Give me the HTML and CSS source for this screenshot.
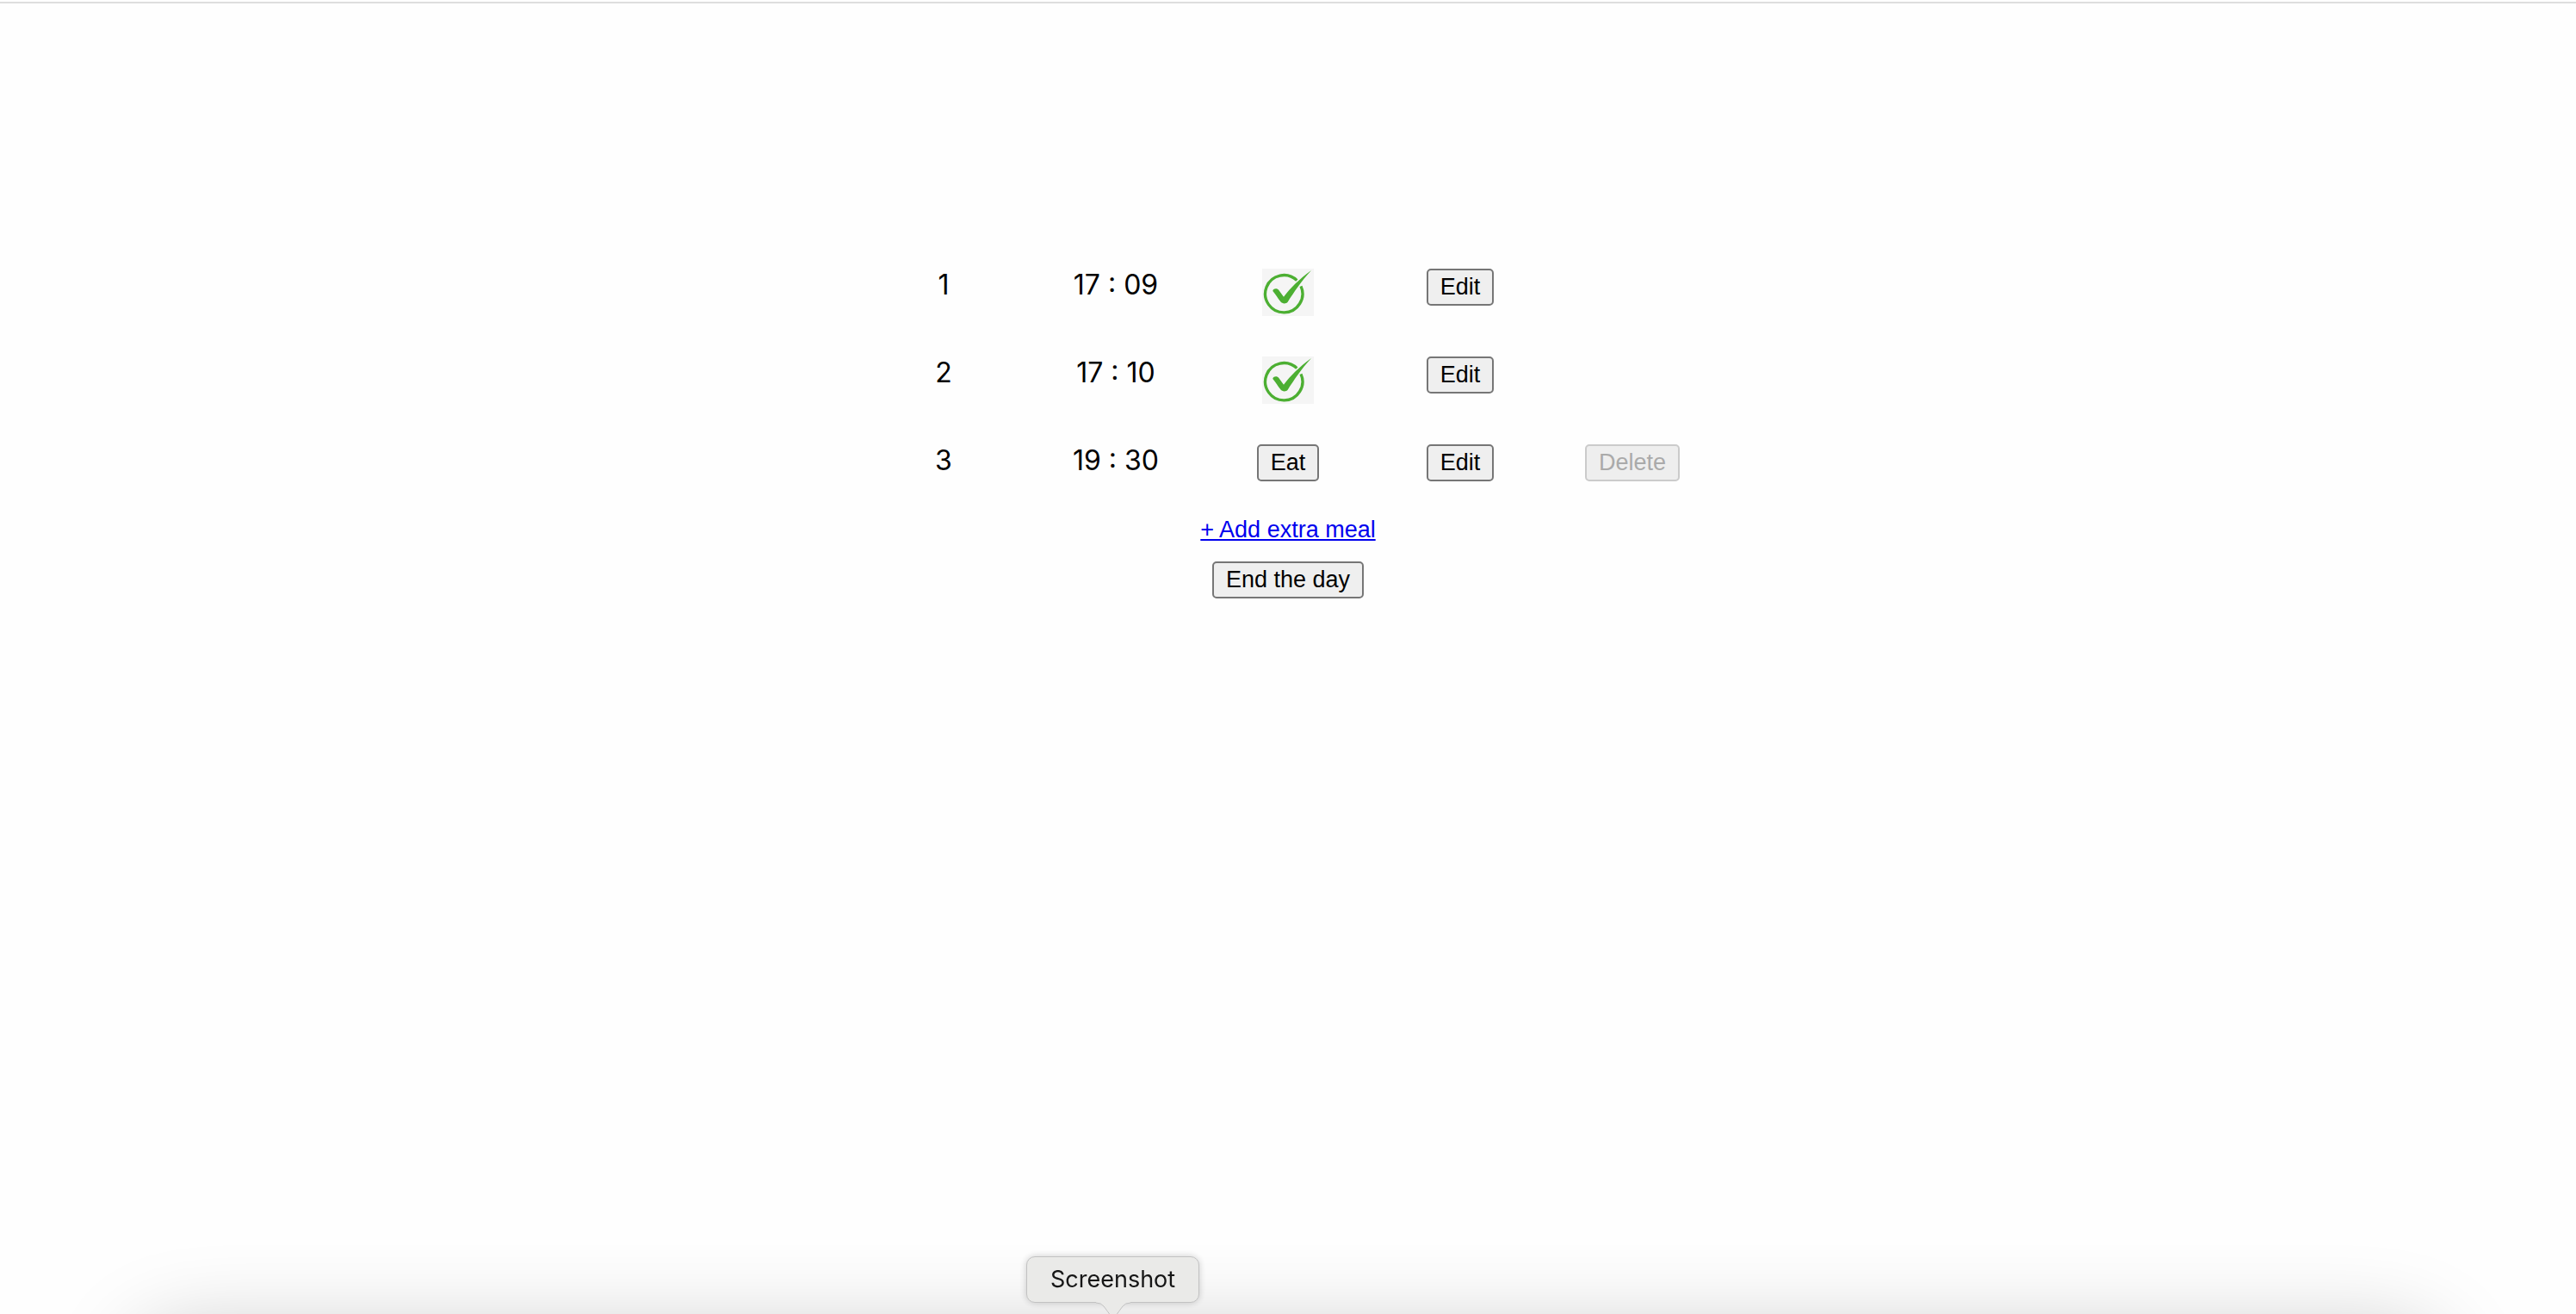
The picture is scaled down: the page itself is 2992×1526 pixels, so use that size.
FILE: index.html
```html
<!DOCTYPE html>
<html lang="en">
<head>
<meta charset="utf-8">
<title>Meals</title>
<link rel="stylesheet" href="styles.css">
</head>
<body>
<svg width="0" height="0" class="sprite" aria-hidden="true">
  <symbol id="done" viewBox="0 0 180 165">
    <rect width="180" height="165" fill="#f5f5f5"/>
    <path d="M121 41 A65 65 0 1 0 135 61" fill="none" stroke="#4caf32" stroke-width="10"/>
    <path d="M37 78 C36 69 53 66 58 75 L75 98 C98 68 130 36 171 6 C137 43 111 82 89 116 C84 123 70 123 64 115 C54 103 47 89 37 78Z" fill="#4caf32"/>
  </symbol>
</svg>
<main class="day">
  <table class="meals">
    <tbody>
      <tr>
        <td>1</td>
        <td>17 : 09</td>
        <td><svg class="done" role="img" aria-label="Eaten"><use href="#done"/></svg></td>
        <td><button type="button" class="btn">Edit</button></td>
        <td></td>
      </tr>
      <tr>
        <td>2</td>
        <td>17 : 10</td>
        <td><svg class="done" role="img" aria-label="Eaten"><use href="#done"/></svg></td>
        <td><button type="button" class="btn">Edit</button></td>
        <td></td>
      </tr>
      <tr>
        <td>3</td>
        <td>19 : 30</td>
        <td><button type="button" class="btn">Eat</button></td>
        <td><button type="button" class="btn">Edit</button></td>
        <td><button type="button" class="btn" disabled>Delete</button></td>
      </tr>
    </tbody>
  </table>
  <div class="actions">
    <a class="add" href="#">+ Add extra meal</a>
    <button type="button" class="btn">End the day</button>
  </div>
</main>
<div class="dock">
  <div class="dock-shadow"></div>
  <div class="tooltip" role="tooltip">Screenshot
    <svg class="arrow" viewBox="0 0 40 20" aria-hidden="true">
      <path d="M0 0 H40 V1 Q34 1 31 5 L20 20 L9 5 Q6 1 0 1Z" fill="#eaeae8"/>
      <path d="M0 1 Q6 1 9 5 L20 20 L31 5 Q34 1 40 1" fill="none" stroke="#c2c2c2"/>
    </svg>
  </div>
</div>
</body>
</html>
```
FILE: styles.css
```css
* {
  box-sizing: border-box;
}

body {
  margin: 0;
  min-height: 100vh;
  padding-top: 2px;
  background: #fefefe;
  color: #000;
  font-family: Inter, "Noto Sans", sans-serif;
  font-size: 32px;
  line-height: 38px;
}

.sprite {
  position: absolute;
}

.day {
  display: flex;
  flex-direction: column;
  align-items: center;
  padding-top: 308px;
  border-top: 2px solid #dedede;
}

.meals {
  width: 1000px;
  max-width: 100%;
  table-layout: fixed;
  border-collapse: collapse;
}

.meals td {
  height: 102px;
  padding: 0;
  text-align: center;
  vertical-align: top;
}

.done {
  display: block;
  width: 60px;
  height: 55px;
  margin: 0 auto;
}

.btn {
  height: 43px;
  padding: 0 14px 1px;
  border: 2px solid #767676;
  border-radius: 5px;
  background: #efefef;
  color: #000;
  font-family: "Liberation Sans", Arial, sans-serif;
  font-size: 27px;
  line-height: 36px;
  vertical-align: top;
}

.btn:disabled {
  border-color: #cbcbcb;
  background: #eee;
  color: #aaa;
}

.actions {
  display: flex;
  flex-direction: column;
  align-items: center;
  gap: 18px;
  margin-top: -22px;
}

.add {
  color: #00e;
  font-family: "Liberation Sans", Arial, sans-serif;
  font-size: 27px;
}

.dock {
  position: fixed;
  inset: auto 0 0;
  height: 120px;
  overflow: hidden;
  pointer-events: none;
}

.dock-shadow {
  position: absolute;
  top: 140px;
  left: 155px;
  right: 155px;
  height: 200px;
  border-radius: 60px;
  box-shadow: 0 0 100px rgba(0, 0, 0, 0.22);
}

.tooltip {
  position: absolute;
  left: calc(50% - 304px);
  bottom: 13px;
  padding: 8px 27px;
  border: 1px solid #c2c2c2;
  border-radius: 10px;
  background: #eaeae8;
  box-shadow: 0 0 8px rgba(0, 0, 0, 0.2);
  color: #161616;
  font-size: 27px;
  line-height: 36px;
}

.arrow {
  position: absolute;
  top: 100%;
  left: calc(50% - 20px);
  width: 40px;
  height: 20px;
}
```
